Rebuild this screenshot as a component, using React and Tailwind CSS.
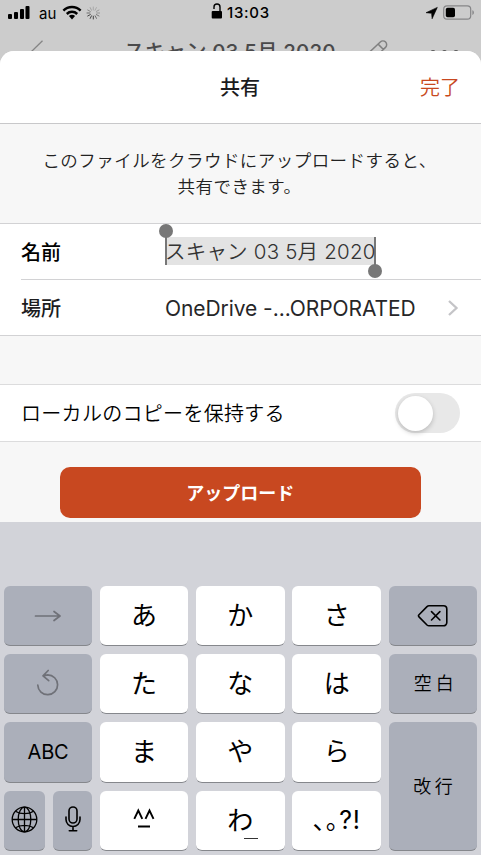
import React, { useState } from 'react';
import clsx from 'clsx';

const thin = "font-[Inter,'Noto_Sans_CJK_JP_DemiLight','Noto_Sans_CJK_JP',sans-serif] font-[350]";

const Key = ({ dark, className, children }) => (
  <button
    className={clsx(
      'flex items-center justify-center rounded-[6px] border-b border-[#85878c] text-black',
      dark ? 'bg-[#abafba]' : 'bg-white',
      className
    )}
  >
    {children}
  </button>
);

const Kana = ({ children }) => (
  <Key className="text-[26px] leading-none">{children}</Key>
);

const StatusBar = () => (
  <div className="relative h-[26px] w-full text-black">
    <svg className="absolute left-0 top-0" width="110" height="26" viewBox="0 0 110 26">
      <rect x="8" y="14" width="4" height="5" rx="1" />
      <rect x="14" y="12" width="4" height="7" rx="1" />
      <rect x="20" y="9" width="4" height="10" rx="1" />
      <rect x="25.5" y="6" width="4" height="13" rx="1" />
      <g fill="none" stroke="#000" strokeWidth="2.5">
        <path d="M63.4 10.6a12.2 12.2 0 0 1 17.2 0" />
        <path d="M66.8 14a7.4 7.4 0 0 1 10.4 0" />
      </g>
      <path d="M68.9 16.1a4.4 4.4 0 0 1 6.2 0L72 19.4z" />
      <g stroke="#444" strokeWidth="1" strokeLinecap="round">
        <path d="M93.3 7v3" opacity=".25" />
        <path d="M96.4 7.6l-1.4 2.7" opacity=".25" />
        <path d="M99 10l-2.6 1.4" opacity=".35" />
        <path d="M99.6 13h-2.9" opacity=".4" />
        <path d="M99 16l-2.6-1.4" opacity=".6" />
        <path d="M96.5 18.4l-1.4-2.6" opacity=".7" />
        <path d="M93.3 16.2V19" />
        <path d="M90.2 18.4l1.3-2.6" />
        <path d="M87.7 16l2.6-1.4" />
        <path d="M87 13h2.9" opacity=".7" />
        <path d="M87.7 10l2.6 1.4" opacity=".5" />
        <path d="M90.2 7.6l1.3 2.7" opacity=".3" />
      </g>
    </svg>
    <span className="absolute left-[39px] top-[6px] text-[15px] leading-4 tracking-[0.1px]">au</span>
    <svg className="absolute left-[210px] top-0" width="14" height="22" viewBox="0 0 14 22">
      <rect x="1.7" y="11" width="10.3" height="7.6" rx="1" />
      <path d="M4 9V7a3 3 0 0 1 6 0v4" fill="none" stroke="#000" strokeWidth="1.4" />
    </svg>
    <span className="absolute left-[227px] top-[5px] text-[15px] font-medium leading-4 tracking-[0.7px]">13:03</span>
    <svg className="absolute left-[424px] top-0" width="57" height="26" viewBox="0 0 57 26">
      <path d="M13.3 7.4L2 12.7l5.6.6.5 5.5z" stroke="#000" strokeWidth=".6" strokeLinejoin="round" />
      <rect x="19.7" y="5.8" width="27" height="13.4" rx="3.4" fill="none" stroke="#858587" strokeWidth="1.2" />
      <rect x="21.8" y="7.8" width="9.2" height="9.4" rx="1.8" />
      <path d="M48.4 10.3c2 .6 2 4 0 4.6z" fill="#858587" />
    </svg>
  </div>
);

const NavBar = () => (
  <div className="relative h-[25px] overflow-hidden text-[#4a4a4b]">
    <svg className="absolute left-[28px] top-[14px]" width="16" height="20" viewBox="0 0 16 20">
      <path d="M14.5 .8L3.5 11.5" fill="none" stroke="#858585" strokeWidth="1.3" />
    </svg>
    <span className="absolute left-[124px] top-[12px] whitespace-nowrap text-[20.5px] font-medium leading-[28px] tracking-[0.15px]">
      スキャン 03 5月 2020
    </span>
    <svg className="absolute left-[366px] top-[13px]" width="24" height="22" viewBox="0 0 24 22">
      <path d="M1 15.5L14.3 3a3.7 3.7 0 0 1 5.2 5.4L7 20.5M12.6 5.6l4.6 4.6" fill="none" stroke="#808080" strokeWidth="1.5" />
    </svg>
    <svg className="absolute left-[428px] top-[23px]" width="34" height="6" viewBox="0 0 34 6">
      <g fill="#5a5a5a">
        <circle cx="5" cy="3.3" r="2.4" />
        <circle cx="16.5" cy="3.3" r="2.4" />
        <circle cx="28" cy="3.3" r="2.4" />
      </g>
    </svg>
  </div>
);

const Keyboard = () => (
  <div className="h-[333px] bg-[#d2d3d9] pl-1 pt-16">
    <div className="grid grid-cols-[88px_88.5px_88.5px_88.5px_88px] grid-rows-[60px_60px_61px_60px] gap-x-[7.8px] gap-y-2">
      <Key dark>
        <svg width="28" height="14" viewBox="0 0 28 14" fill="none" stroke="#6f7178" strokeWidth="1.7" strokeLinecap="round" strokeLinejoin="round">
          <path d="M1.5 7h24.5M20 2.500L26 7l-6 4.500" />
        </svg>
      </Key>
      <Kana>あ</Kana>
      <Kana>か</Kana>
      <Kana>さ</Kana>
      <Key dark>
        <svg width="32" height="24" viewBox="0 0 32 24" fill="none" stroke="#000" strokeWidth="1.6" strokeLinecap="round" strokeLinejoin="round">
          <path d="M12 1.800H26.500a3.300 3.300 0 0 1 3.300 3.300v13.400a3.300 3.300 0 0 1-3.300 3.300H12a3 3 0 0 1-2-.8L2 12.900a1.600 1.600 0 0 1 0-2.200L10 2.600a3 3 0 0 1 2-.8z" />
          <path d="M14.500 7.600l8.400 8.400M22.900 7.600L14.500 16" />
        </svg>
      </Key>

      <Key dark>
        <svg className="-mt-px" width="28" height="30" viewBox="0 0 28 30" fill="none" stroke="#6f7178" strokeWidth="1.7" strokeLinecap="round" strokeLinejoin="round">
          <path d="M3.800 17.200a9.900 9.900 0 1 0 9.900-10.300L9.200 7.800M14.200 2.500L9 7.900l5.700 4.800" />
        </svg>
      </Key>
      <Kana>た</Kana>
      <Kana>な</Kana>
      <Kana>は</Kana>
      <Key dark className={clsx(thin, 'pl-[6px] text-[18px] tracking-[4px]')}>空白</Key>

      <Key dark className="text-[20px] tracking-[-0.2px]">ABC</Key>
      <Kana>ま</Kana>
      <Kana>や</Kana>
      <Kana>ら</Kana>
      <Key dark className={clsx(thin, 'row-span-2 pl-[4px] text-[18px] tracking-[3.5px]')}>改行</Key>

      <div className="grid grid-cols-[41px_39px] gap-x-2">
        <Key dark>
          <svg className="-mt-0.5" width="27" height="27" viewBox="0 0 27 27" fill="none" stroke="#000" strokeWidth="1.3">
            <circle cx="13.5" cy="13.5" r="12.3" />
            <ellipse cx="13.5" cy="13.5" rx="6.3" ry="12.3" />
            <path d="M13.5 1.2v24.6M1.2 13.5h24.6M4.5 5.3c4.5 3.2 13.5 3.2 18 0M4.5 21.7c4.5-3.2 13.5-3.2 18 0" />
          </svg>
        </Key>
        <Key dark>
          <svg className="-mt-[3px]" width="18" height="28" viewBox="0 0 18 28" fill="none" stroke="#000" strokeWidth="1.6" strokeLinecap="round">
            <rect x="5" y="2" width="8" height="16" rx="4" />
            <path d="M2 12v2.500a7 7 0 0 0 14 0V12M9 21.500v4M5.300 25.700h7.400" />
          </svg>
        </Key>
      </div>
      <Key>
        <svg className="-mt-[3px]" width="24" height="22" viewBox="0 0 24 22" fill="none" stroke="#000" strokeWidth="1.9">
          <path d="M2.300 10.800L6.300 2.500l4 8.300M13.500 10.800l4-8.300 4 8.300M6 18.500h12" />
        </svg>
      </Key>
      <Key className="relative text-[26px] leading-none">
        わ
        <span className="absolute left-[48px] top-[47px] h-px w-[14px] bg-[#333]" />
      </Key>
      <Key className="text-[25px] leading-none tracking-[0.8px] [font-feature-settings:'halt']">、。?!</Key>
    </div>
  </div>
);

const App = () => {
  const [keepCopy, setKeepCopy] = useState(false);

  return (
    <div className="h-[855px] w-[481px] overflow-hidden bg-[#cccccc] font-[Inter,'Noto_Sans_CJK_JP',sans-serif]">
      <StatusBar />
      <NavBar />

      {/* Share sheet */}
      <div className="h-[471px] rounded-t-[14px] bg-[#f7f7f7]">
        <header className="grid h-[73px] grid-cols-3 items-center rounded-t-[14px] border-b border-[#c8c8ca] bg-white px-[21px] pt-0.5 text-[20px]">
          <span />
          <h1 className="pr-px text-center font-medium text-[#1c1c1e]">共有</h1>
          <button className={clsx(thin, 'text-right text-[#c84820]')}>完了</button>
        </header>

        <p className={clsx(thin, 'h-[99px] pr-0.5 pt-6 text-center text-[17.5px] leading-[26px] tracking-[0.45px] text-[#222]')}>
          このファイルをクラウドにアップロードすると、
          <br />
          共有できます。
        </p>

        <section className="border-y border-[#d2d2d4] bg-white pl-[21px] text-[20px]">
          <div className="flex h-14 items-center border-b border-[#d2d2d4]">
            <span className="w-[144px] pt-0.5 font-medium text-black">名前</span>
            <div className="relative -mt-px h-7 w-[211px] border-x-2 border-[#777] bg-[#e3e3e3]">
              <span className={clsx(thin, '-ml-0.5 whitespace-nowrap text-[20.5px] leading-7 tracking-[0.2px] text-[#333]')}>
                スキャン 03 5月 2020
              </span>
              <span className="absolute -left-2 -top-[13px] size-[14px] rounded-full bg-[#777]" />
              <span className="absolute -bottom-[13px] -right-2 size-[14px] rounded-full bg-[#777]" />
            </div>
          </div>
          <div className="flex h-[55px] items-center">
            <span className="w-[144px] pt-0.5 font-medium text-[#1c1c1e]">場所</span>
            <span className="flex-1 pt-0.5 text-[21px] tracking-[-0.07px] text-[#262628]">OneDrive -...ORPORATED</span>
            <svg className="mr-[22px]" width="12" height="18" viewBox="0 0 12 18">
              <path d="M2 2l7.500 7L2 16" fill="none" stroke="#c4c4c7" strokeWidth="2.3" />
            </svg>
          </div>
        </section>

        <section className="mt-12 flex h-[58px] items-center justify-between border-y border-[#dcdcdd] bg-white px-[21px]">
          <span className={clsx(thin, 'pt-0.5 text-[20px] tracking-[0.3px] text-black')}>ローカルのコピーを保持する</span>
          <button
            role="switch"
            aria-checked={keepCopy}
            onClick={() => setKeepCopy(!keepCopy)}
            className={clsx(
              'flex h-10 w-[65px] items-center rounded-full px-[2.5px]',
              keepCopy ? 'justify-end bg-[#34c759]' : 'bg-[#e8e8e8]'
            )}
          >
            <span className="size-[35px] rounded-full bg-white shadow-[0_2px_5px_rgba(0,0,0,0.2)]" />
          </button>
        </section>

        <button className="ml-[60px] mt-[25px] block h-[51px] w-[360.5px] rounded-[10px] bg-[#c84820] pt-0.5 text-[18px] font-bold text-white">
          アップロード
        </button>
      </div>

      <Keyboard />
    </div>
  );
};

export default App;
